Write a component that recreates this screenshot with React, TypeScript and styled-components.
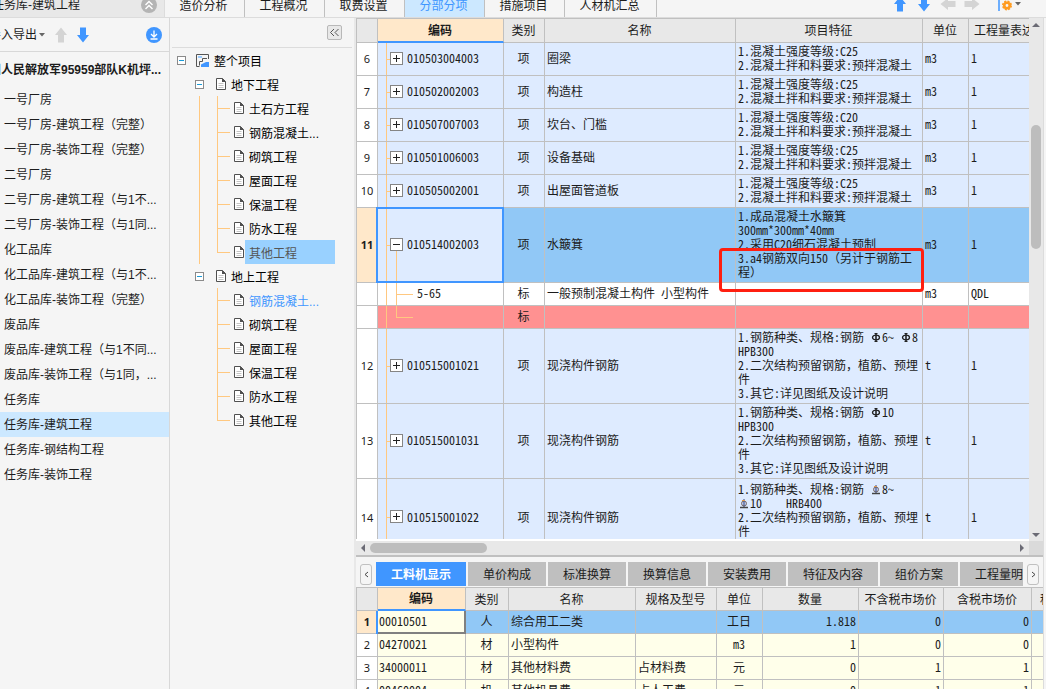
import React from "react";
import styled, { createGlobalStyle, css } from "styled-components";

const BLUE = "#4096ff";
const LINE = "#c0c0c0";
const ORANGE = "#ffc880";
const UI = `"Liberation Sans", "Noto Sans CJK SC", sans-serif`;
const GRID = `"Noto Sans Mono CJK SC", "Noto Sans CJK SC", monospace`;

const Global = createGlobalStyle`
  * { box-sizing: border-box; }
  body { margin: 0; overflow: hidden; background: #f5f5f5; color: #1c1c1c; font: 12px/16px ${UI}; }
  button { margin: 0; padding: 0; border: 0; background: none; font: inherit; color: inherit; cursor: pointer; }
  ul { list-style: none; margin: 0; padding: 0; }
  svg { display: block; flex: none; }
`;

const Page = styled.div`
  display: flex;
  flex-direction: column;
  height: 100vh;
  overflow: hidden;
`;

const TopBar = styled.header`
  display: flex;
  align-items: flex-end;
  flex: none;
  height: 18px;
  overflow: hidden;
  border-bottom: 1px solid #dcdcdc;
`;

const ProjectTitle = styled.div`
  display: flex;
  align-items: center;
  justify-content: space-between;
  flex: none;
  width: 165px;
  height: 25px;
  padding-right: 7px;
  background: #e8e8e8;
  border-right: 1px solid #dcdcdc;
  white-space: nowrap;
`;

const ClippedLabel = styled.span<{ $shift: number }>`
  margin-left: ${(p) => -p.$shift}px;
  white-space: nowrap;
`;

const TopTab = styled.button<{ $active?: boolean; $wide?: boolean }>`
  flex: none;
  width: ${(p) => (p.$wide ? 92 : 80)}px;
  height: 25px;
  padding: 2px 2px 0 0;
  border-right: 1px solid ${LINE};
  background: ${(p) => (p.$active ? "#cce8ff" : "transparent")};
  color: ${(p) => (p.$active ? BLUE : "inherit")};
`;

const TopTools = styled.div`
  display: flex;
  align-items: center;
  gap: 8px;
  height: 26px;
  margin-left: auto;
  padding-right: 25px;
`;

const SettingsTool = styled.button`
  display: flex;
  align-items: center;
  gap: 3px;
  margin-left: 10px;
`;

const Body = styled.div`
  display: flex;
  flex: 1;
  min-height: 0;
`;

const Sidebar = styled.aside`
  flex: none;
  width: 170px;
  overflow: hidden;
  border-right: 1px solid #d8d8d8;
`;

const SidebarTools = styled.div`
  display: flex;
  align-items: center;
  height: 34px;
  padding-right: 7px;
  border-bottom: 1px solid #d8d8d8;
`;

const ExportButton = styled.button`
  display: flex;
  align-items: center;
  gap: 2px;
  margin-right: 8px;
`;

const ArrowButton = styled.button`
  margin-right: 6px;
`;

const DownloadButton = styled.button`
  margin-left: auto;
`;

const SidebarHeading = styled.div`
  display: flex;
  align-items: center;
  height: 35px;
  overflow: hidden;
  font-weight: bold;
`;

const SidebarItem = styled.button<{ $active?: boolean }>`
  display: block;
  width: 100%;
  height: 25px;
  padding-left: 4px;
  text-align: left;
  white-space: nowrap;
  background: ${(p) => (p.$active ? "#cce8ff" : "transparent")};
`;

const TreePanel = styled.nav`
  flex: none;
  width: 186px;
  border-right: 2px solid #e8e8e8;
`;

const TreeTools = styled.div`
  display: flex;
  align-items: center;
  justify-content: flex-end;
  height: 30px;
  margin: 0 2px;
  padding-right: 10px;
  border-bottom: 1px solid #dcdcdc;
`;

const CollapseButton = styled.button`
  display: grid;
  place-items: center;
  width: 15px;
  height: 15px;
  border: 1px solid #b8b8b8;
  border-radius: 2px;
  background: #e8e8e8;
`;

const TreeRow = styled.div<{ $indent: number }>`
  display: flex;
  align-items: center;
  height: 24px;
  padding-left: ${(p) => p.$indent}px;
`;

const Toggle = styled.button<{ $gap: number }>`
  display: grid;
  place-items: center;
  width: 9px;
  height: 9px;
  margin-right: ${(p) => p.$gap}px;
  border: 1px solid #8a8a8a;
  background: #fff;
  &::after {
    content: "";
    width: 5px;
    height: 1px;
    background: #1a9ad6;
  }
`;

const Guide = styled.span<{ $visible: boolean }>`
  width: 18px;
  height: 24px;
  border-left: 1px solid ${(p) => (p.$visible ? ORANGE : "transparent")};
`;

const Branch = styled.span<{ $last: boolean }>`
  width: 13px;
  height: 24px;
  margin-right: 4px;
  background:
    linear-gradient(${ORANGE}, ${ORANGE}) 0 0 / 1px ${(p) => (p.$last ? "12px" : "24px")} no-repeat,
    linear-gradient(${ORANGE}, ${ORANGE}) 0 12px / 13px 1px no-repeat;
`;

const TreeLabel = styled.button<{ $selected?: boolean; $link?: boolean }>`
  height: 24px;
  padding: 4px 4px 0;
  margin-left: 1px;
  text-align: left;
  white-space: nowrap;
  color: ${(p) => (p.$link ? BLUE : p.$selected ? "#555" : "#000")};
  ${(p) =>
    p.$selected &&
    css`
      width: 90px;
      background: #99d1ff;
    `}
`;

const Main = styled.main`
  display: flex;
  flex-direction: column;
  flex: 1;
  min-width: 0;
  margin-right: 2px;
  border-right: 1px solid #dcdcdc;
`;

const UpperPane = styled.section`
  display: flex;
  flex: 1;
  min-height: 0;
`;

const Viewport = styled.div`
  flex: 1;
  min-width: 0;
  overflow: hidden;
  border-bottom: 2px solid #fff;
`;

const Table = styled.table`
  table-layout: fixed;
  border-collapse: separate;
  border-spacing: 0;
  border-top: 1px solid ${LINE};
  border-left: 1px solid ${LINE};
  width: 0;
  font: 12px/14px ${GRID};
`;

const Th = styled.th<{ $current?: boolean }>`
  height: 24px;
  padding: 0 1px 1px 0;
  overflow: hidden;
  white-space: nowrap;
  font-weight: ${(p) => (p.$current ? "bold" : "normal")};
  background: ${(p) => (p.$current ? "#ffe8ca" : "#e8e8e8")};
  border-right: 1px solid ${LINE};
  border-bottom: ${(p) => (p.$current ? `2px solid ${BLUE}` : `1px solid ${LINE}`)};
`;

const BottomTh = styled(Th)`
  height: 23px;
`;

const RowNumber = styled.th<{ $current?: boolean }>`
  padding: 0;
  font-family: "Noto Sans", sans-serif;
  font-size: 11px;
  font-weight: ${(p) => (p.$current ? "bold" : "normal")};
  background: ${(p) => (p.$current ? "#ffe8ca" : "#fff")};
  border-right: 1px solid ${LINE};
  border-bottom: 1px solid ${LINE};
`;

type Tone = "item" | "current" | "plain" | "alert" | "resource";
const tones: Record<Tone, string> = {
  item: "#deebff",
  current: "#91c8f6",
  plain: "#ffffff",
  alert: "#ff9191",
  resource: "#ffffea",
};

const Tr = styled.tr<{ $height: number; $tone: Tone }>`
  height: ${(p) => p.$height}px;
  background: ${(p) => tones[p.$tone]};
`;

const Td = styled.td<{ $align?: "center" | "right" }>`
  position: relative;
  padding: 0 2px 2px 1px;
  text-align: ${(p) => p.$align || "left"};
  white-space: pre;
  border-right: 1px solid ${LINE};
  border-bottom: 1px solid ${LINE};
`;

const rail = (x: string, y: string, w: string, h: string) =>
  `linear-gradient(${ORANGE}, ${ORANGE}) ${x} ${y} / ${w} ${h} no-repeat`;

type Kind = "closed" | "open" | "child" | "lastChild";

const CodeCell = styled(Td)<{ $kind: Kind }>`
  padding-left: ${(p) => (p.$kind === "closed" || p.$kind === "open" ? 12 : 39)}px;
  background: ${(p) =>
    [
      rail("8px", "0", "1px", "100%"),
      ...(p.$kind === "closed" || p.$kind === "open" ? [rail("8px", "50%", "4px", "1px")] : []),
      ...(p.$kind === "open" ? [rail("18px", "100%", "1px", "50%")] : []),
      ...(p.$kind === "child" ? [rail("18px", "0", "1px", "100%"), rail("18px", "50%", "17px", "1px")] : []),
      ...(p.$kind === "lastChild" ? [rail("18px", "0", "1px", "50%"), rail("18px", "50%", "17px", "1px")] : []),
    ].join(",")};
  ${(p) =>
    p.$kind === "open" &&
    css`
      background-color: #deebff;
      &::after {
        content: "";
        position: absolute;
        inset: -1px -1px -1px -2px;
        border: 2px solid ${BLUE};
        pointer-events: none;
      }
    `}
`;

const CodeLine = styled.div`
  display: flex;
  align-items: center;
  gap: 4px;
`;

const Expander = styled.button<{ $open: boolean }>`
  width: 13px;
  height: 13px;
  border: 1px solid #858585;
  background:
    linear-gradient(#222, #222) center / 7px 1px no-repeat,
    linear-gradient(#222, #222) center / 1px ${(p) => (p.$open ? "0" : "7px")} no-repeat,
    #fff;
`;

const TextCell = styled(Td)`
  padding-left: 2px;
`;

const Highlight = styled.div`
  position: absolute;
  z-index: 2;
  left: -17px;
  right: -2px;
  top: 40px;
  height: 44px;
  border: 3px solid #ff1f10;
  border-radius: 4px;
`;

const PickedCell = styled(Td)`
  background: ${tones.resource};
  border-right: 2px solid #808080;
  border-bottom: 2px solid #808080;
  box-shadow: -2px 0 0 ${BLUE};
`;

const VScroll = styled.div`
  display: flex;
  flex-direction: column;
  align-items: center;
  flex: none;
  width: 14px;
  padding: 3px 0 2px;
  background: #e8e8e8;
`;

const VThumb = styled.div`
  width: 10px;
  height: 24%;
  min-height: 24px;
  border-radius: 5px;
  background: #bdbdbd;
`;

const VSpace = styled.div<{ $grow: number }>`
  flex: ${(p) => p.$grow};
`;

const HScroll = styled.div`
  display: flex;
  align-items: center;
  flex: none;
  height: 14px;
  padding-left: 3px;
  background: #e8e8e8;
`;

const HThumb = styled.div`
  width: 117px;
  height: 10px;
  margin: 0 auto 0 3px;
  border-radius: 5px;
  background: #bdbdbd;
`;

const Corner = styled.div`
  width: 14px;
  height: 14px;
  margin-left: 3px;
  background: #dadada;
`;

const LowerPane = styled.section`
  flex: none;
  height: 134px;
  overflow: hidden;
  border-top: 2px solid ${LINE};
`;

const TabStrip = styled.div`
  display: flex;
  align-items: center;
  height: 30px;
  padding: 5px 4px 1px;
`;

const TabList = styled.div`
  display: flex;
  gap: 2px;
  flex: 1;
  min-width: 0;
  overflow: hidden;
  margin: 0 4px;
`;

const Tab = styled.button<{ $active?: boolean; $wide?: boolean }>`
  flex: none;
  width: ${(p) => (p.$wide ? 90 : 78)}px;
  height: 24px;
  padding-top: 2px;
  background: ${(p) => (p.$active ? BLUE : "#bfbfbf")};
  color: ${(p) => (p.$active ? "#fff" : "#1c1c1c")};
  font-weight: ${(p) => (p.$active ? "bold" : "normal")};
`;

const TabScroll = styled.button`
  display: grid;
  place-items: center;
  flex: none;
  width: 12px;
  height: 21px;
  border: 1px solid #c0c0c0;
  border-radius: 3px;
`;

const Arrow = ({ turn = 0, color = BLUE }: { turn?: number; color?: string }) => (
  <svg width="16" height="16" viewBox="0 0 16 16">
    <path d="M8 0.500 14 8H11v7.500H5V8H2z" fill={color} transform={`rotate(${turn} 8 8)`} />
  </svg>
);

const Caret = () => (
  <svg width="6" height="4" viewBox="0 0 6 4">
    <path d="M0 0h6L3 3.500z" fill="#666" />
  </svg>
);

const Pointer = ({ turn }: { turn: number }) => (
  <svg width="8" height="8" viewBox="0 0 8 8">
    <path d="M4 2 8 6H0z" fill="#6b6b75" transform={`rotate(${turn} 4 4)`} />
  </svg>
);

const Chevron = ({ flip }: { flip?: boolean }) => (
  <svg width="5" height="7" viewBox="0 0 5 7">
    <path d={flip ? "M1 1l3 2.500-3 2.500" : "M4 1 1 3.500l3 2.500"} fill="none" stroke="#444" />
  </svg>
);

const DocIcon = () => (
  <svg width="10" height="12" viewBox="0 0 10 12">
    <path d="M.5.5h6l3 3v8h-9z" fill="#fff" stroke="#505050" />
    <path d="M6 0v4h4z" fill="#505050" />
    <path d="M2.500 5.500h5M2.500 7.500h5M2.500 9.500h5" stroke="#c4c4c4" />
  </svg>
);

const RootIcon = () => (
  <svg width="13" height="13" viewBox="0 0 13 13">
    <path d="M12.500 5V.5H.5v12h3" fill="none" stroke="#555" />
    <path d="M2 2h4v2H2z" fill="#9cccff" />
    <path d="M11 4.500H6.500v3h-3v4" fill="none" stroke="#555" />
    <path d="M5 13v-2.500l3-1.500 2 -1h3v5z" fill={BLUE} />
  </svg>
);

const RebarMark = styled.svg`
  display: inline-block;
  vertical-align: -1px;
  width: 12px;
  height: 10px;
`;

const Rebar = ({ ribbed }: { ribbed?: boolean }) => (
  <RebarMark viewBox="0 0 12 10">
    {ribbed ? (
      <g fill="none">
        <circle cx="6" cy="4.500" r="2.500" fill="#b9c8ee" stroke="#7a6a62" />
        <path d="M6 0v8" stroke="#3b4a80" />
        <path d="M4 1.500h3" stroke="#e09a50" />
        <path d="M2 8.500h8" stroke="#444" strokeWidth="1.500" />
      </g>
    ) : (
      <g fill="none" stroke="#222">
        <ellipse cx="6" cy="4.500" rx="3.500" ry="2.300" strokeWidth="1.300" />
        <path d="M6 0v9" strokeWidth="1.600" />
        <path d="M4.500.5h3M4.500 8.500h3" />
      </g>
    )}
  </RebarMark>
);

const library: string[] = [
  "一号厂房",
  "一号厂房-建筑工程（完整）",
  "一号厂房-装饰工程（完整）",
  "二号厂房",
  "二号厂房-建筑工程（与1不...",
  "二号厂房-装饰工程（与1同...",
  "化工品库",
  "化工品库-建筑工程（与1不...",
  "化工品库-装饰工程（完整）",
  "废品库",
  "废品库-建筑工程（与1不同...",
  "废品库-装饰工程（与1同，...",
  "任务库",
  "任务库-建筑工程",
  "任务库-钢结构工程",
  "任务库-装饰工程",
];

const groups = [
  { name: "地下工程", items: ["土石方工程", "钢筋混凝土...", "砌筑工程", "屋面工程", "保温工程", "防水工程", "其他工程"] },
  { name: "地上工程", items: ["钢筋混凝土...", "砌筑工程", "屋面工程", "保温工程", "防水工程", "其他工程"] },
];

const concrete = (grade: string) => `1.混凝土强度等级:${grade}\n2.混凝土拌和料要求:预拌混凝土`;
const rebarTail = "2.二次结构预留钢筋，植筋、预埋\n件\n3.其它:详见图纸及设计说明";

interface Item {
  no: string;
  code: string;
  type: string;
  name: string;
  feature: React.ReactNode;
  unit: string;
  qty: string;
  height: number;
  tone: Tone;
  kind: Kind;
}

const closed = (no: string, code: string, name: string, feature: React.ReactNode, unit: string, height: number): Item => ({
  no, code, type: "项", name, feature, unit, qty: "1", height, tone: "item", kind: "closed",
});

const items: Item[] = [
  closed("6", "010503004003", "圈梁", concrete("C25"), "m3", 33),
  closed("7", "010502002003", "构造柱", concrete("C25"), "m3", 33),
  closed("8", "010507007003", "坎台、门槛", concrete("C20"), "m3", 33),
  closed("9", "010501006003", "设备基础", concrete("C25"), "m3", 33),
  closed("10", "010505002001", "出屋面管道板", concrete("C25"), "m3", 33),
  {
    no: "11", code: "010514002003", type: "项", name: "水簸箕", unit: "m3", qty: "1", height: 75, tone: "current", kind: "open",
    feature: (
      <>
        {"1.成品混凝土水簸箕\n300mm*300mm*40mm\n2.采用C20细石混凝土预制\n3.a4钢筋双向150（另计于钢筋工\n程）"}
        <Highlight />
      </>
    ),
  },
  { no: "", code: "5-65", type: "标", name: "一般预制混凝土构件 小型构件", feature: "", unit: "m3", qty: "QDL", height: 23, tone: "plain", kind: "child" },
  { no: "", code: "", type: "标", name: "", feature: "", unit: "", qty: "", height: 23, tone: "alert", kind: "lastChild" },
  closed("12", "010515001021", "现浇构件钢筋", <>{"1.钢筋种类、规格:钢筋 "}<Rebar />{"6~ "}<Rebar />{"8\nHPB300\n" + rebarTail}</>, "t", 75),
  closed("13", "010515001031", "现浇构件钢筋", <>{"1.钢筋种类、规格:钢筋 "}<Rebar />{"10\nHPB300\n" + rebarTail}</>, "t", 75),
  closed("14", "010515001022", "现浇构件钢筋", <>{"1.钢筋种类、规格:钢筋 "}<Rebar ribbed />{"8~\n"}<Rebar ribbed />{"10    HRB400\n" + rebarTail}</>, "t", 78),
];

const resources = [
  ["1", "00010501", "人", "综合用工二类", "", "工日", "1.818", "0", "0"],
  ["2", "04270021", "材", "小型构件", "", "m3", "1", "0", "0"],
  ["3", "34000011", "材", "其他材料费", "占材料费", "元", "0", "1", "1"],
  ["4", "00460004", "机", "其他机具费", "占人工费", "元", "0", "1", "1"],
];

const Columns = ({ widths }: { widths: number[] }) => (
  <colgroup>
    {widths.map((w, i) => (
      <col key={i} width={w} />
    ))}
  </colgroup>
);

const topTabs = ["造价分析", "工程概况", "取费设置", "分部分项", "措施项目", "人材机汇总"];
const lowerTabs = ["工料机显示", "单价构成", "标准换算", "换算信息", "安装费用", "特征及内容", "组价方案", "工程量明细"];

export default function App() {
  return (
    <Page>
      <Global />
      <TopBar>
        <ProjectTitle>
          <ClippedLabel $shift={8}>任务库-建筑工程</ClippedLabel>
          <button aria-label="收起">
            <svg width="16" height="16" viewBox="0 0 16 16">
              <circle cx="8" cy="8" r="8" fill="#b4b4b4" />
              <path d="M4.500 8 8 4.500 11.500 8M4.500 12 8 8.500l3.500 3.500" fill="none" stroke="#fff" strokeWidth="1.400" />
            </svg>
          </button>
        </ProjectTitle>
        {topTabs.map((t) => (
          <TopTab key={t} $active={t === "分部分项"} $wide={t.length > 4}>
            {t}
          </TopTab>
        ))}
        <TopTools>
          <button aria-label="上移"><Arrow /></button>
          <button aria-label="下移"><Arrow turn={180} /></button>
          <button aria-label="升级"><Arrow turn={270} color="#d4d4d4" /></button>
          <button aria-label="降级"><Arrow turn={90} color="#d4d4d4" /></button>
          <SettingsTool aria-label="设置">
            <svg width="14" height="16" viewBox="0 0 14 16">
              <path d="M1 0v15M4 2.500h3" stroke={BLUE} strokeWidth="1.500" />
              <circle cx="9" cy="9.500" r="2.700" fill="none" stroke="#ff9b1f" strokeWidth="2.600" />
              <circle cx="9" cy="9.500" r="4.200" fill="none" stroke="#ff9b1f" strokeWidth="1.600" strokeDasharray="2 1.300" />
            </svg>
            <Caret />
          </SettingsTool>
        </TopTools>
      </TopBar>
      <Body>
        <Sidebar>
          <SidebarTools>
            <ExportButton>
              <ClippedLabel $shift={11}>导入导出</ClippedLabel>
              <Caret />
            </ExportButton>
            <ArrowButton aria-label="上移"><Arrow color="#d4d4d4" /></ArrowButton>
            <ArrowButton aria-label="下移"><Arrow turn={180} /></ArrowButton>
            <DownloadButton aria-label="下载">
              <svg width="16" height="16" viewBox="0 0 16 16">
                <circle cx="8" cy="8" r="8" fill={BLUE} />
                <path d="M8 3.500v6M5 7l3 3 3-3M4.500 12h7" fill="none" stroke="#fff" strokeWidth="1.300" />
              </svg>
            </DownloadButton>
          </SidebarTools>
          <SidebarHeading>
            <ClippedLabel $shift={11}>国人民解放军95959部队K机坪...</ClippedLabel>
          </SidebarHeading>
          <ul>
            {library.map((name) => (
              <li key={name}>
                <SidebarItem $active={name === "任务库-建筑工程"}>{name}</SidebarItem>
              </li>
            ))}
          </ul>
        </Sidebar>
        <TreePanel>
          <TreeTools>
            <CollapseButton aria-label="折叠面板">
              <svg width="11" height="9" viewBox="0 0 11 9">
                <path d="M5 1 1.500 4.500 5 8M9.500 1 6 4.500 9.500 8" fill="none" stroke="#555" />
              </svg>
            </CollapseButton>
          </TreeTools>
          <TreeRow $indent={7}>
            <Toggle $gap={10} aria-label="折叠" />
            <RootIcon />
            <TreeLabel>整个项目</TreeLabel>
          </TreeRow>
          {groups.map((g, gi) => (
            <React.Fragment key={g.name}>
              <TreeRow $indent={25}>
                <Toggle $gap={12} aria-label="折叠" />
                <DocIcon />
                <TreeLabel>{g.name}</TreeLabel>
              </TreeRow>
              {g.items.map((name, i) => (
                <TreeRow key={name} $indent={29}>
                  <Guide $visible={gi === 0} />
                  <Branch $last={i === g.items.length - 1} />
                  <DocIcon />
                  <TreeLabel $selected={gi === 0 && name === "其他工程"} $link={gi === 1 && i === 0}>
                    {name}
                  </TreeLabel>
                </TreeRow>
              ))}
            </React.Fragment>
          ))}
        </TreePanel>
        <Main>
          <UpperPane>
            <Viewport>
              <Table>
                <Columns widths={[21, 126, 41, 191, 187, 46, 84]} />
                <thead>
                  <tr>
                    <Th />
                    <Th $current>编码</Th>
                    <Th>类别</Th>
                    <Th>名称</Th>
                    <Th>项目特征</Th>
                    <Th>单位</Th>
                    <Th>工程量表达式</Th>
                  </tr>
                </thead>
                <tbody>
                  {items.map((r, i) => (
                    <Tr key={i} $height={r.height} $tone={r.tone}>
                      <RowNumber $current={r.tone === "current"}>{r.no}</RowNumber>
                      <CodeCell $kind={r.kind}>
                        <CodeLine>
                          {(r.kind === "closed" || r.kind === "open") && (
                            <Expander $open={r.kind === "open"} aria-label="展开或折叠" />
                          )}
                          {r.code}
                        </CodeLine>
                      </CodeCell>
                      <Td $align="center">{r.type}</Td>
                      <TextCell>{r.name}</TextCell>
                      <TextCell>{r.feature}</TextCell>
                      <TextCell>{r.unit}</TextCell>
                      <TextCell>{r.qty}</TextCell>
                    </Tr>
                  ))}
                </tbody>
              </Table>
            </Viewport>
            <VScroll>
              <Pointer turn={0} />
              <VSpace $grow={96} />
              <VThumb />
              <VSpace $grow={283} />
              <Pointer turn={180} />
            </VScroll>
          </UpperPane>
          <HScroll>
            <Pointer turn={270} />
            <HThumb />
            <Pointer turn={90} />
            <Corner />
          </HScroll>
          <LowerPane>
            <TabStrip>
              <TabScroll aria-label="向左"><Chevron /></TabScroll>
              <TabList>
                {lowerTabs.map((t, i) => (
                  <Tab key={t} $active={i === 0} $wide={t.length > 4}>
                    {t}
                  </Tab>
                ))}
              </TabList>
              <TabScroll aria-label="向右"><Chevron flip /></TabScroll>
            </TabStrip>
            <Table>
              <Columns widths={[21, 88, 43, 127, 81, 46, 96, 85, 88, 42]} />
              <thead>
                <tr>
                  <BottomTh />
                  <BottomTh $current>编码</BottomTh>
                  {["类别", "名称", "规格及型号", "单位", "数量", "不含税市场价", "含税市场价", "税率"].map((h) => (
                    <BottomTh key={h}>{h}</BottomTh>
                  ))}
                </tr>
              </thead>
              <tbody>
                {resources.map(([no, code, type, name, spec, unit, qty, net, gross], i) => (
                  <Tr key={no} $height={23} $tone={i === 0 ? "current" : "resource"}>
                    <RowNumber $current={i === 0}>{no}</RowNumber>
                    {i === 0 ? <PickedCell>{code}</PickedCell> : <Td>{code}</Td>}
                    <Td $align="center">{type}</Td>
                    <TextCell>{name}</TextCell>
                    <TextCell>{spec}</TextCell>
                    <Td $align="center">{unit}</Td>
                    <Td $align="right">{qty}</Td>
                    <Td $align="right">{net}</Td>
                    <Td $align="right">{gross}</Td>
                    <Td />
                  </Tr>
                ))}
              </tbody>
            </Table>
          </LowerPane>
        </Main>
      </Body>
    </Page>
  );
}
